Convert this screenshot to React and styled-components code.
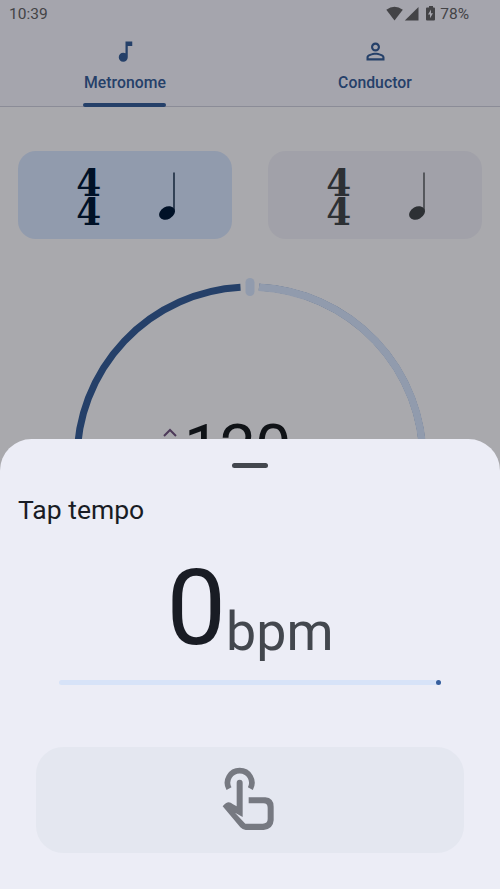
import React from 'react';
import styled, { createGlobalStyle, ThemeProvider } from 'styled-components';

const theme = {
  background: '#a9a9ad',
  header: '#a5a5ad',
  divider: '#8b8c97',
  primary: '#254069',
  primaryContainer: '#919bad',
  onPrimaryContainer: '#001127',
  secondary: '#a1a1a9',
  onSecondary: '#2d3034',
  status: '#434346',
  text: '#101317',
  tertiary: '#4c3958',
  sheet: '#ecedf6',
  onSheet: '#191c24',
  onSheetVariant: '#43474e',
  track: '#d7e3f8',
  indicator: '#365e9d',
  button: '#e4e7f0',
  buttonIcon: '#767981',
};

const GlobalStyle = createGlobalStyle`
  body {
    margin: 0;
    font-family: Roboto, sans-serif;
  }
`;

const Screen = styled.div`
  display: flex;
  position: relative;
  flex-direction: column;
  width: 500px;
  height: 889px;
  overflow: hidden;
  background: ${(props) => props.theme.background};
`;

const Header = styled.header`
  box-sizing: border-box;
  height: 107px;
  background: ${(props) => props.theme.header};
  border-bottom: 1px solid ${(props) => props.theme.divider};
`;

const StatusBar = styled.div`
  display: flex;
  box-sizing: border-box;
  justify-content: space-between;
  height: 27px;
  padding: 0 31px 0 9px;
  line-height: 29px;
  font-size: 15.5px;
  color: ${(props) => props.theme.status};

  .status-icons {
    display: flex;
    align-items: flex-start;
  }

  svg {
    margin: 3.5px 4px 0 0;
  }
`;

const Tabs = styled.nav`
  display: flex;
  height: 80px;
`;

const StyledTab = styled.div`
  display: flex;
  flex: 1;
  flex-direction: column;
  align-items: center;
  padding-top: 11.2px;
  box-sizing: border-box;
  color: ${(props) => props.theme.primary};

  svg {
    display: block;
    fill: currentColor;
  }

  span {
    margin-top: 8.8px;
    font-size: 15.75px;
    font-weight: 500;
    line-height: 18px;
    letter-spacing: 0.05px;
  }
`;

const TabIndicator = styled.div`
  width: 83px;
  height: 4px;
  margin: 11px 1px 0 0;
  border-radius: 3px;
  background: ${(props) => props.theme.primary};
`;

const Cards = styled.div`
  display: flex;
  gap: 36px;
  padding: 44px 18px 0;
`;

const Card = styled.div`
  display: flex;
  flex: 1;
  box-sizing: border-box;
  height: 88px;
  padding-left: 58px;
  border-radius: 18px;
  color: ${(props) => (props.$active ? props.theme.onPrimaryContainer : props.theme.onSecondary)};
  background: ${(props) => (props.$active ? props.theme.primaryContainer : props.theme.secondary)};

  svg {
    margin: 20px 0 0 58px;
  }
`;

const TimeSignature = styled.div`
  display: flex;
  flex-direction: column;
  width: 25px;
  padding-top: 18px;
  font-family: 'DejaVu Serif', serif;
  font-size: 36.5px;
  font-weight: 700;
  line-height: 29.3px;
  transform: scaleX(0.98);
`;

const Dial = styled.div`
  display: flex;
  position: relative;
  justify-content: center;
  height: 370px;
  margin-top: 35px;
`;

const Tempo = styled.div`
  display: flex;
  position: absolute;
  top: 137px;
  left: 162px;
  align-items: flex-start;
  color: ${(props) => props.theme.text};
  font-size: 64px;
  line-height: 75px;
  letter-spacing: -0.3px;

  svg {
    margin: 17px 6px 0 0;
    color: ${(props) => props.theme.tertiary};
  }
`;

const Sheet = styled.section`
  display: flex;
  position: absolute;
  right: 0;
  bottom: 0;
  left: 0;
  flex-direction: column;
  align-items: center;
  height: 450px;
  border-radius: 31.5px 31.5px 0 0;
  background: ${(props) => props.theme.sheet};

  h1 {
    align-self: flex-start;
    margin: 26px 0 0 18px;
    color: ${(props) => props.theme.onSheet};
    font-size: 26.5px;
    font-weight: 400;
    line-height: 32px;
  }
`;

const Handle = styled.div`
  width: 36px;
  height: 5px;
  margin-top: 24px;
  border-radius: 3px;
  background: ${(props) => props.theme.onSheetVariant};
`;

const Reading = styled.div`
  display: flex;
  align-items: flex-end;
  height: 127px;
  margin-top: 19px;
  color: ${(props) => props.theme.onSheet};
  font-size: 106px;
  line-height: 127px;
  letter-spacing: -1px;

  span {
    color: ${(props) => props.theme.onSheetVariant};
    font-size: 53.7px;
    letter-spacing: 0;
    line-height: 64px;
    margin: 0 0 8px 1px;
  }
`;

const Progress = styled.div`
  display: flex;
  justify-content: flex-end;
  width: 382px;
  height: 5px;
  margin-top: 8px;
  border-radius: 3px;
  background: ${(props) => props.theme.track};

  i {
    width: 5px;
    border-radius: 50%;
    background: ${(props) => props.theme.indicator};
  }
`;

const TapButton = styled.button`
  display: flex;
  box-sizing: border-box;
  align-items: flex-start;
  justify-content: center;
  width: 428px;
  height: 106px;
  margin-top: 62px;
  padding: 20px 3px 0 0;
  border: 0;
  border-radius: 27px;
  color: ${(props) => props.theme.buttonIcon};
  background: ${(props) => props.theme.button};
`;

function Tab(props) {
  return (
    <StyledTab>
      <svg width="27" height="27" viewBox="0 0 24 24">
        <path d={props.icon} />
      </svg>
      <span>{props.label}</span>
      {props.active && <TabIndicator />}
    </StyledTab>
  );
}

function BeatCard(props) {
  return (
    <Card $active={props.active}>
      <TimeSignature>
        <span>4</span>
        <span>4</span>
      </TimeSignature>
      <svg width="18" height="50" viewBox="0 0 18 50">
        <path d="M15 1.5V41" stroke="currentColor" strokeWidth="1.3" />
        <ellipse cx="8" cy="42" rx="8.3" ry="6.2" transform="rotate(-28 8 42)" fill="currentColor" />
      </svg>
    </Card>
  );
}

function StatusIcons() {
  return (
    <>
      <svg width="50" height="20" viewBox="0 0 50 20" fill="currentColor">
        <path d="M.3 5.7Q8.5-.4 16.8 5.7L8.5 16.5Z" />
        <path d="M32.5 3V16.5H18.8Z" />
        <path
          fillRule="evenodd"
          d="M41 3.4H43V1.9H47V3.4H48Q49 3.4 49 4.4V15.5Q49 16.5 48 16.5H41Q40 16.5 40 15.5V4.4Q40 3.4 41 3.4ZM45 5.6L42 10.6H44V14.3L47 9.3H45Z"
        />
      </svg>
      <span>78%</span>
    </>
  );
}

function App() {
  return (
    <ThemeProvider theme={theme}>
      <GlobalStyle />
      <Screen>
        <Header>
          <StatusBar>
            <span>10:39</span>
            <div className="status-icons">
              <StatusIcons />
            </div>
          </StatusBar>
          <Tabs>
            <Tab
              active
              label="Metronome"
              icon="M12 3v10.55c-.59-.34-1.27-.55-2-.55-2.21 0-4 1.79-4 4s1.79 4 4 4 4-1.79 4-4V7h4V3h-6z"
            />
            <Tab
              label="Conductor"
              icon="M12 5.9c1.16 0 2.1.94 2.1 2.1s-.94 2.1-2.1 2.1S9.9 9.16 9.9 8s.94-2.1 2.1-2.1m0 9c2.97 0 6.1 1.46 6.1 2.1v1.1H5.9V17c0-.64 3.13-2.1 6.1-2.1M12 4C9.79 4 8 5.79 8 8s1.79 4 4 4 4-1.79 4-4-1.79-4-4-4zm0 9c-2.67 0-8 1.34-8 4v3h16v-3c0-2.66-5.33-4-8-4z"
            />
          </Tabs>
        </Header>
        <Cards>
          <BeatCard active />
          <BeatCard />
        </Cards>
        <Dial>
          <svg width="360" height="370" viewBox="0 0 360 370" fill="none">
            <path d="M189 13.2A173 173 0 0 1 353 186" stroke={theme.primary} strokeWidth="6.8" />
            <path d="M189 13.2A173 173 0 0 1 353 186" stroke={theme.primaryContainer} strokeWidth="7.4" />
            <path d="M7 186A173 173 0 0 1 170.5 13.2" stroke={theme.primary} strokeWidth="7" />
            <rect x="175.5" y="4" width="9" height="18" rx="4.5" fill={theme.primaryContainer} />
          </svg>
          <Tempo>
            <svg width="16" height="10" viewBox="0 0 16 10" fill="none">
              <path d="M2 8L8 2L14 8" stroke="currentColor" strokeWidth="2" />
            </svg>
            <span>120</span>
          </Tempo>
        </Dial>
        <Sheet>
          <Handle />
          <h1>Tap tempo</h1>
          <Reading>
            0
            <span>bpm</span>
          </Reading>
          <Progress>
            <i />
          </Progress>
          <TapButton aria-label="Tap">
            <svg width="54" height="64" viewBox="66 80 162 192">
              <path d="M87 145A36.5 36.5 0 1 1 151 145" fill="none" stroke="currentColor" strokeWidth="17" />
              <path
                fill="currentColor"
                d="M110 127A9 9 0 0 1 128 127V230L105 217L136 250H188Q203 250 203 236V202Q203 189 190 189H146V171H196Q221 173 221 199V240Q219 267 191 269H137Q127 268 121 261L68 198Q78 186 86 186Q92 186 99 192L110 198Z"
              />
            </svg>
          </TapButton>
        </Sheet>
      </Screen>
    </ThemeProvider>
  );
}

export default App;
